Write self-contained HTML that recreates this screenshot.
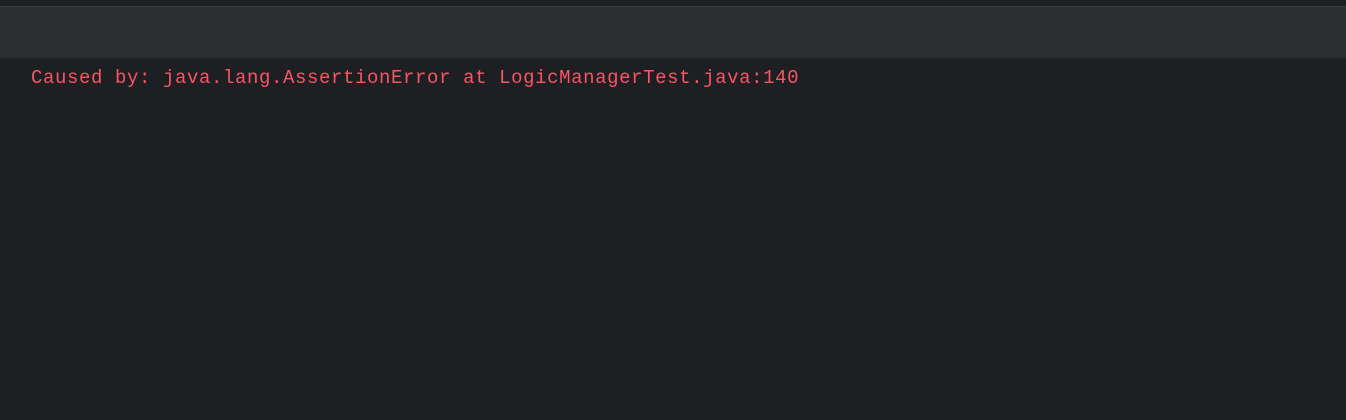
<html><head><style>
body{margin:0;width:1346px;height:420px;background:#1e1f22;overflow:hidden;position:relative}
.top{position:absolute;left:0;top:0;width:1346px;height:6px;background:#1e1f22;border-bottom:1px solid #393b40}
.bar{position:absolute;left:0;top:7px;width:1346px;height:51px;background:#2b2d30}
.t{position:absolute;left:31px;top:65px;font-family:"Liberation Mono",monospace;font-size:19px;letter-spacing:0.6px;color:#f75464;line-height:26px;white-space:pre}
</style></head><body>
<div class="top"></div><div class="bar"></div>
<div class="t">Caused by: java.lang.AssertionError at LogicManagerTest.java:140</div>
</body></html>
